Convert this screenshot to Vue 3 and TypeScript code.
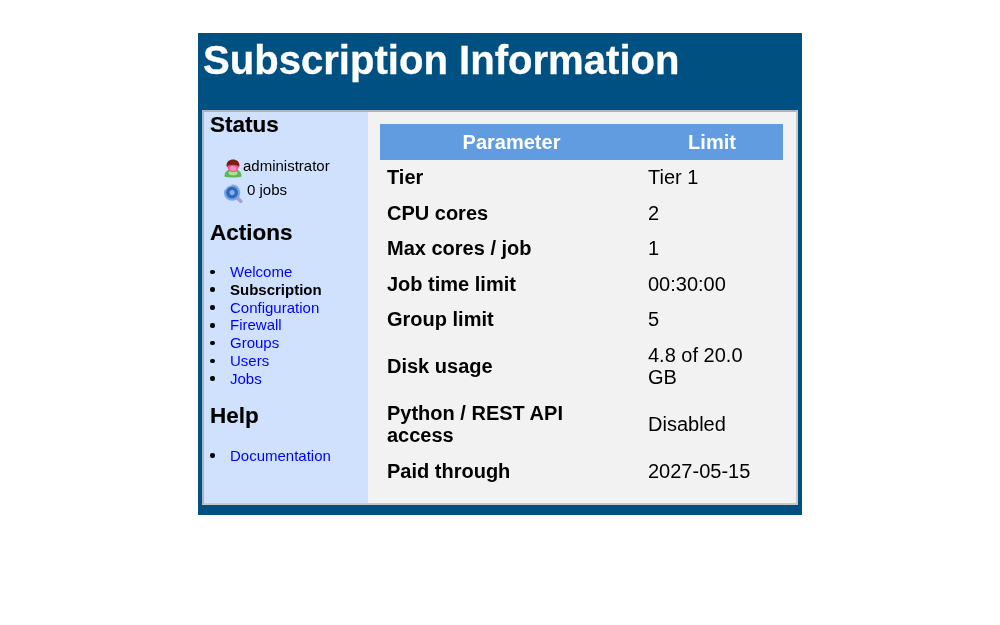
<script setup lang="ts">
const rows: { p: string; v: string }[] = [
  { p: 'Tier', v: 'Tier 1' },
  { p: 'CPU cores', v: '2' },
  { p: 'Max cores / job', v: '1' },
  { p: 'Job time limit', v: '00:30:00' },
  { p: 'Group limit', v: '5' },
  { p: 'Disk usage', v: '4.8 of 20.0 GB' },
  { p: 'Python / REST API access', v: 'Disabled' },
  { p: 'Paid through', v: '2027-05-15' },
]
const actions = [
  { t: 'Welcome' },
  { t: 'Subscription', cur: true },
  { t: 'Configuration' },
  { t: 'Firewall' },
  { t: 'Groups' },
  { t: 'Users' },
  { t: 'Jobs' },
]
</script>

<template>
  <div class="page">
    <div class="frame">
      <h1 class="title">Subscription Information</h1>
      <div class="panel">
        <aside class="side">
          <h3 class="h-status">Status</h3>
          <div class="stat stat-user">
            <svg class="ico" viewBox="0 0 20 20" width="18" height="19">
              <path d="M0.500 19c0-5 3-8.500 9.500-8.500s9.500 3.500 9.500 8.500c-3 1.500-16 1.500-19 0z" fill="#62b45a" />
              <ellipse cx="10" cy="15" rx="5" ry="2.600" fill="#a5e391" />
              <circle cx="10" cy="7.500" r="6.500" fill="#e8558f" />
              <path d="M3 8C2 2.500 6 0 10 0s8 2.500 7 8C14.500 5 5.500 5 3 8z" fill="#7d1c14" />
              <ellipse cx="10" cy="10" rx="4" ry="2.800" fill="#f490b8" />
            </svg>
            <span>administrator</span>
          </div>
          <div class="stat stat-jobs">
            <svg class="ico" viewBox="0 0 22 22" width="20" height="21">
              <path d="M15 15l4.500 4.500" stroke="#a79bd6" stroke-width="4" stroke-linecap="round" />
              <circle cx="10" cy="10" r="9" fill="#76a6e2" />
              <circle cx="10" cy="10" r="6.500" fill="#2f66bb" />
              <circle cx="10" cy="10" r="2.800" fill="#86b0e6" />
              <path d="M2 7a8.500 8.500 0 0 1 7.500-5.500" stroke="#d6e4f7" stroke-width="1.500" fill="none" />
            </svg>
            <span>0 jobs</span>
          </div>
          <h3 class="h-actions">Actions</h3>
          <ul class="nav">
            <li v-for="a in actions" :key="a.t">
              <b v-if="a.cur">{{ a.t }}</b>
              <a v-else href="#">{{ a.t }}</a>
            </li>
          </ul>
          <h3 class="h-help">Help</h3>
          <ul class="nav">
            <li><a href="#">Documentation</a></li>
          </ul>
        </aside>
        <main class="main">
          <table class="tbl">
            <thead>
              <tr><th class="c1">Parameter</th><th class="c2">Limit</th></tr>
            </thead>
            <tbody>
              <tr v-for="r in rows" :key="r.p">
                <td class="c1 name">{{ r.p }}</td>
                <td class="c2">{{ r.v }}</td>
              </tr>
            </tbody>
          </table>
        </main>
      </div>
    </div>
  </div>
</template>

<style scoped>
.page {
  width: 1000px;
  height: 625px;
  padding-top: 33px;
  box-sizing: border-box;
  background: #fff;
  font-family: "Liberation Sans", Arial, sans-serif;
  color: #000;
  overflow: hidden;
}
.frame {
  width: 604px;
  height: 482px;
  margin-left: 198px;
  background: #005082;
  padding: 0 4px;
  box-sizing: border-box;
  filter: blur(0.3px);
}
.title {
  margin: 0;
  height: 77px;
  padding-left: 1px;
  padding-top: 3px;
  box-sizing: border-box;
  color: #fff;
  font-size: 40.100px;
  line-height: 48px;
  font-weight: bold;
  -webkit-text-stroke: 0.3px #fff;
}
.panel {
  display: flex;
  height: 395px;
  border: 2px solid;
  border-color: #a9b4bd #c8c8c8 #c8c8c8 #a9b4bd;
  box-sizing: border-box;
  background: #f2f2f2;
}
.side {
  width: 164px;
  flex: none;
  background: #cfe1fd;
  box-sizing: border-box;
  padding-left: 6px;
}
h3 {
  margin: 0;
  font-size: 22.500px;
  line-height: 26px;
  font-weight: bold;
  -webkit-text-stroke: 0.15px #000;
}
.stat {
  display: flex;
  align-items: flex-start;
  font-size: 15px;
  line-height: 18px;
  height: 24px;
}
.stat span { margin-top: 2px; }
.ico { flex: none; margin-top: 4px; }
.stat-user { margin-top: 17px; margin-left: 14px; gap: 1px; }
.stat-jobs { margin-left: 13px; gap: 4px; }
.h-actions { margin-top: 17px; }
.nav {
  list-style: none;
  margin: 0;
  padding: 0;
  font-size: 15px;
  line-height: 17.800px;
}
.nav li {
  display: flex;
  align-items: center;
}
.nav li::before {
  content: "";
  flex: none;
  width: 4.500px;
  height: 4.500px;
  border-radius: 50%;
  background: #000;
  margin-right: 15.500px;
}
.h-actions + .nav { margin-top: 17px; }
.h-help + .nav { margin-top: 18px; }
.h-help { margin-top: 15px; }
a { color: #0000ff; text-decoration: none; }
.main {
  flex: 1;
  padding: 12px 13px 0 12px;
  box-sizing: border-box;
}
.tbl {
  width: 403px;
  border-collapse: collapse;
  table-layout: fixed;
  font-size: 20px;
  line-height: 22.500px;
}
.tbl th {
  background: #609cdf;
  color: #fff;
  height: 35.750px;
  padding: 0;
  font-weight: bold;
  text-align: center;
}
th.c1 { width: 259px; padding-left: 2px; }
.tbl td {
  padding: 6.500px 7px;
  vertical-align: middle;
}
.tbl td.c1 { padding-right: 50px; }
.tbl td.c2 { padding-right: 12px; }
.name { font-weight: bold; }
</style>
